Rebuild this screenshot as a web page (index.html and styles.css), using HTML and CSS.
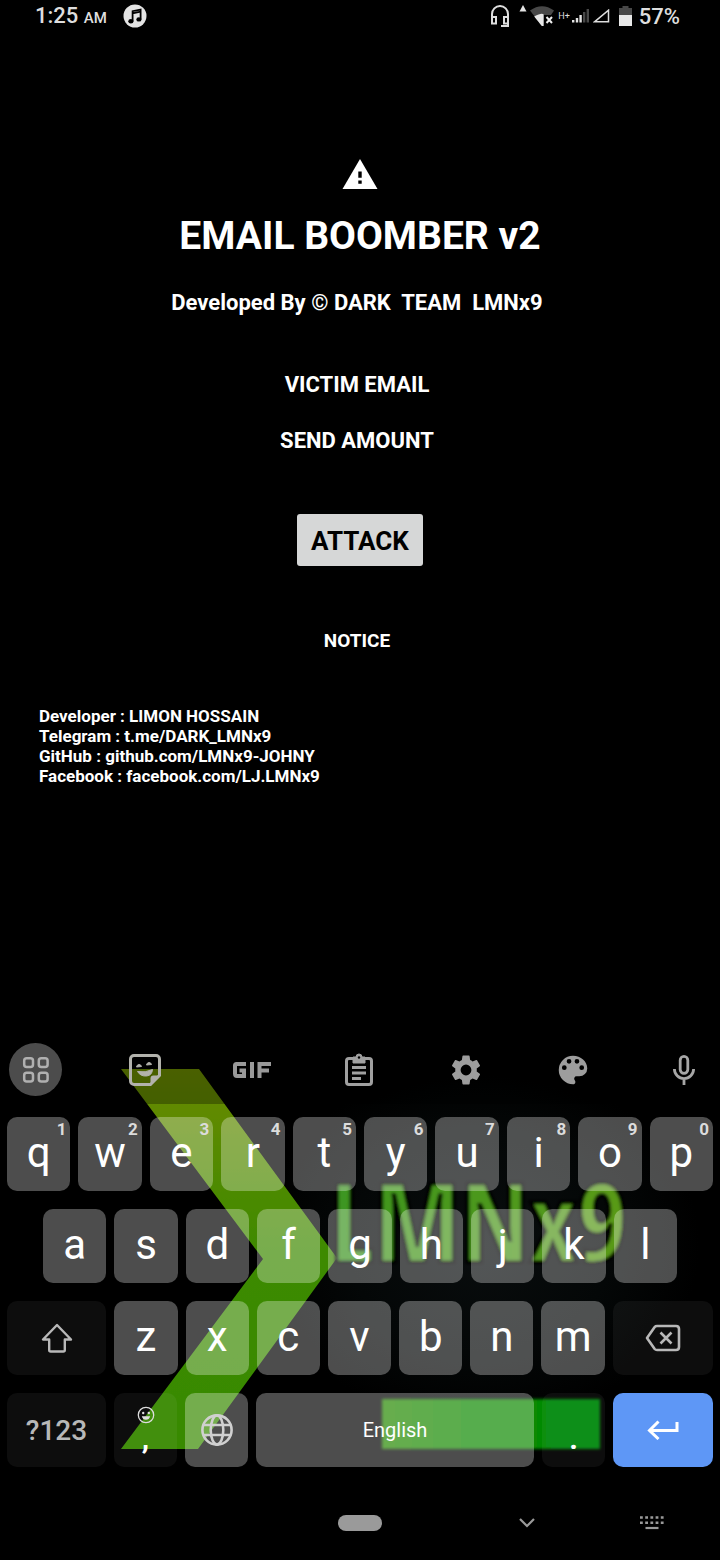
FILE: index.html
```html
<!DOCTYPE html>
<html lang="en">
<head>
<meta charset="utf-8">
<meta name="viewport" content="width=device-width, initial-scale=1">
<title>EMAIL BOOMBER v2</title>
<link rel="stylesheet" href="styles.css">
</head>
<body>
<header class="status">
  <div class="status-left">
    <span class="clock">1:25 <small>AM</small></span>
    <svg class="music" width="24" height="24" viewBox="0 0 24 24"><circle cx="12" cy="12" r="11.5" fill="#e4e4e4"/><path d="M9.600 17V7.200l8-1.700v9.800M9.600 9.400l8-1.700" fill="none" stroke="#000" stroke-width="1.800"/><ellipse cx="7.900" cy="17.200" rx="2.600" ry="2.200"/><ellipse cx="15.900" cy="15.400" rx="2.600" ry="2.200"/></svg>
  </div>
  <div class="status-right">
    <svg class="gap-l" width="20" height="24" viewBox="0 0 20 24" fill="none" stroke="#dedede" stroke-width="2"><path d="M2 19.500V10a8 8 0 0 1 16 0v12H11"/><rect x="2" y="13" width="4" height="6.500"/><rect x="14" y="13" width="4" height="6.500"/></svg>
    <svg class="gap-s" width="36" height="22" viewBox="0 0 36 22"><path d="M4 0l3.500 6.500h-7z" fill="#e4e4e4"/><path d="M11 5.500Q23 -3 35 5.500L31 11.500 23 21z" fill="#484848"/><path d="M15.200 11.500q8-4.500 9.600-1.800V21h-2z" fill="#e8e8e8"/><path d="M24.800 10h10v12h-10z" fill="#000"/><path d="M27.500 12l5.500 6m0-6l-5.500 6" stroke="#eee" stroke-width="2"/></svg>
    <span class="net">H+</span>
    <svg class="gap-s" width="18" height="14" viewBox="0 0 18 14"><path d="M0 11h2.400v2.500H0zM3.800 9h2.400v4.500H3.800zM7.400 6h2.400v7.500H7.400z" fill="#e4e4e4"/><path d="M11 3h2.400v10.500H11zM14.600 0H17v13.500h-2.400z" fill="#484848"/></svg>
    <svg class="gap-l" width="17" height="14" viewBox="0 0 17 14"><path d="M1.500 12.800L15.500 1.200v11.600z" fill="none" stroke="#dedede" stroke-width="1.500"/></svg>
    <svg class="gap-m" width="13" height="20" viewBox="0 0 13 20"><path d="M0 2h3.500V0h6v2H13v8H0z" fill="#484848"/><path d="M0 9h13v11H0z" fill="#e8e8e8"/></svg>
    <span class="battery">57%</span>
  </div>
</header>

<main class="app">
  <svg class="warning" width="36" height="30" viewBox="0 0 36 30"><path d="M18 0l17.500 30H.5z" fill="#fff"/><path d="M16.300 12.500h3.400v6.200h-3.400zM16.300 21.500h3.400v3.300h-3.400z"/></svg>
  <h1 class="title">EMAIL BOOMBER v2</h1>
  <p class="credit">Developed By © DARK&nbsp; TEAM&nbsp; LMNx9</p>
  <div class="fields">
    <input class="field" type="text" aria-label="Victim email" placeholder="VICTIM EMAIL">
    <input class="field" type="text" aria-label="Send amount" placeholder="SEND AMOUNT">
  </div>
  <button class="attack" type="button">ATTACK</button>
  <h2 class="notice">NOTICE</h2>
  <ul class="info">
    <li>Developer : LIMON HOSSAIN</li>
    <li>Telegram : t.me/DARK_LMNx9</li>
    <li>GitHub : github.com/LMNx9-JOHNY</li>
    <li>Facebook : facebook.com/LJ.LMNx9</li>
  </ul>
</main>

<section class="keyboard" aria-label="Keyboard">
  <svg class="wallpaper" viewBox="0 0 720 432" preserveAspectRatio="none" aria-hidden="true">
    <defs>
      <linearGradient id="arrow" x1="0" y1="0" x2="0" y2="1"><stop offset="0" stop-color="#6a8a00"/><stop offset=".5" stop-color="#3c8a00"/><stop offset="1" stop-color="#388a00"/></linearGradient>
      <linearGradient id="bar" x1="0" y1="0" x2="1" y2="0"><stop offset="0" stop-color="#288a00"/><stop offset=".45" stop-color="#0c8a04"/><stop offset="1" stop-color="#008a08"/></linearGradient>
      <linearGradient id="name" x1="0" y1="0" x2="1" y2="0"><stop offset="0" stop-color="#3c9620"/><stop offset="1" stop-color="#5a9a18"/></linearGradient>
      <radialGradient id="glow"><stop offset="0" stop-color="#090d0e"/><stop offset=".6" stop-color="#040707"/><stop offset="1" stop-color="#000"/></radialGradient>
      <filter id="soft"><feGaussianBlur stdDeviation="1.500"/></filter>
      <filter id="edge"><feGaussianBlur stdDeviation=".7"/></filter>
    </defs>
    <ellipse cx="480" cy="210" rx="220" ry="180" fill="url(#glow)"/>
    <path d="M121 34h78l138 189-139 191h-77l142-190z" fill="url(#arrow)" filter="url(#edge)"/>
    <text class="brand" x="330" y="227" fill="url(#name)" filter="url(#soft)">LMNx9</text>
    <path d="M382 364h218v50H382z" fill="url(#bar)" filter="url(#soft)"/>
  </svg>

  <div class="toolbar">
    <button class="tool tool-menu" type="button" aria-label="Menu"><svg width="28" height="28" viewBox="0 0 28 28" fill="none" stroke="#b0b0b0" stroke-width="2.500"><rect x="2.200" y="2.200" width="8.800" height="8.800" rx="2.500"/><rect x="16.800" y="2.200" width="8.800" height="8.800" rx="2.500"/><rect x="2.200" y="16.800" width="8.800" height="8.800" rx="2.500"/><rect x="16.800" y="16.800" width="8.800" height="8.800" rx="2.500"/></svg></button>
    <button class="tool" type="button" aria-label="Stickers"><svg width="32" height="32" viewBox="0 0 32 32"><path d="M5 1.500h22a3.500 3.500 0 0 1 3.500 3.500v16.500l-9 9H5A3.500 3.500 0 0 1 1.500 27V5A3.500 3.500 0 0 1 5 1.500z" fill="none" stroke="#b2b2ac" stroke-width="3"/><path d="M30.500 21.500h-6a3 3 0 0 0-3 3v6z" fill="#b2b2ac"/><path d="M8.500 17.500q8 1.500 15-2-.5 6-6 6.500-6 .5-9-4.500zM7.500 13q.5-2.500 2.500-2.500t2.500 2zM17.500 11q.5-2.500 2.500-2.500t2.500 2z" fill="#b2b2ac" stroke="#b2b2ac"/></svg></button>
    <button class="tool tool-gif" type="button" aria-label="GIF"><svg width="40" height="18" viewBox="0 0 40 18" fill="none" stroke="#999" stroke-width="4"><path d="M14 3H4.500Q3 3 3 4.500v8Q3 15 5 15h7V9.500H7.500M20 1v16M27.500 17V3H39M27.500 9.500H37"/></svg></button>
    <button class="tool" type="button" aria-label="Clipboard"><svg width="30" height="34" viewBox="0 0 30 34" fill="none" stroke="#a0a0a0"><rect x="2.500" y="5.500" width="25" height="26" rx="2.500" stroke-width="3"/><path d="M9 4h3a3 3 0 0 1 6 0h3v6H9z" fill="#a0a0a0"/><circle cx="15" cy="4.500" r="1.200" fill="#000" stroke="none"/><path d="M8 14.500h14M8 20h14M8 25.500h9" stroke-width="2.800"/></svg></button>
    <button class="tool" type="button" aria-label="Settings"><svg width="36" height="36" viewBox="0 0 24 24" fill="#9d9d9d"><path d="M19.140 12.940c.04-.3.06-.61.06-.94s-.02-.64-.07-.94l2.030-1.580a.49.49 0 0 0 .12-.61l-1.920-3.320a.49.49 0 0 0-.59-.22l-2.390.96a7 7 0 0 0-1.620-.94l-.36-2.540A.48.48 0 0 0 13.920 2.400h-3.840a.48.48 0 0 0-.47.41l-.36 2.540c-.59.24-1.130.57-1.620.94l-2.390-.96a.48.48 0 0 0-.59.22L2.740 8.870a.48.48 0 0 0 .12.61l2.030 1.580a7 7 0 0 0 0 1.880l-2.030 1.580a.49.49 0 0 0-.12.61l1.920 3.320c.12.22.37.29.59.22l2.390-.96c.5.380 1.030.7 1.620.94l.36 2.540c.05.24.24.41.48.41h3.840c.24 0 .44-.17.470-.41l.36-2.540c.59-.24 1.130-.56 1.620-.94l2.390.96c.22.080.47 0 .59-.22l1.920-3.320a.48.48 0 0 0-.12-.61zM12 15.600a3.600 3.600 0 1 1 0-7.200 3.600 3.600 0 0 1 0 7.200z"/></svg></button>
    <button class="tool" type="button" aria-label="Theme"><svg width="38" height="38" viewBox="0 0 24 24" fill="#9d9d9d"><path d="M12 3a9 9 0 0 0 0 18c.83 0 1.500-.67 1.500-1.500 0-.39-.15-.74-.39-1.010a1.500 1.500 0 0 1 1.110-2.490H16a5 5 0 0 0 5-5c0-4.420-4.030-8-9-8zm-5.500 9a1.500 1.500 0 1 1 0-3 1.500 1.500 0 0 1 0 3zm3-4a1.500 1.500 0 1 1 0-3 1.500 1.500 0 0 1 0 3zm5 0a1.500 1.500 0 1 1 0-3 1.500 1.500 0 0 1 0 3zm3 4a1.500 1.500 0 1 1 0-3 1.500 1.500 0 0 1 0 3z"/></svg></button>
    <button class="tool tool-mic" type="button" aria-label="Voice input"><svg width="28" height="32" viewBox="0 0 28 32" fill="none" stroke="#a6a6a6" stroke-width="2.800"><rect x="10.200" y="2.400" width="7.600" height="17" rx="3.800"/><path d="M4.400 15a9.600 9.600 0 0 0 19.200 0M14 25v6"/></svg></button>
  </div>

  <div class="keys">
    <div class="row">
      <button class="key" type="button">q<span class="hint">1</span></button>
      <button class="key" type="button">w<span class="hint">2</span></button>
      <button class="key" type="button">e<span class="hint">3</span></button>
      <button class="key" type="button">r<span class="hint">4</span></button>
      <button class="key" type="button">t<span class="hint">5</span></button>
      <button class="key" type="button">y<span class="hint">6</span></button>
      <button class="key" type="button">u<span class="hint">7</span></button>
      <button class="key" type="button">i<span class="hint">8</span></button>
      <button class="key" type="button">o<span class="hint">9</span></button>
      <button class="key" type="button">p<span class="hint">0</span></button>
    </div>
    <div class="row row-inset">
      <button class="key" type="button">a</button>
      <button class="key" type="button">s</button>
      <button class="key" type="button">d</button>
      <button class="key" type="button">f</button>
      <button class="key" type="button">g</button>
      <button class="key" type="button">h</button>
      <button class="key" type="button">j</button>
      <button class="key" type="button">k</button>
      <button class="key" type="button">l</button>
    </div>
    <div class="row row-wide">
      <button class="key dark" type="button" aria-label="Shift"><svg width="32" height="30" viewBox="0 0 32 30" fill="none" stroke="#b8b8b8" stroke-width="2.400" stroke-linejoin="round"><path d="M16 2L2 16.500h6.200V27q0 1.500 1.500 1.500h12.600q1.500 0 1.500-1.500V16.500H30z"/></svg></button>
      <button class="key" type="button">z</button>
      <button class="key" type="button">x</button>
      <button class="key" type="button">c</button>
      <button class="key" type="button">v</button>
      <button class="key" type="button">b</button>
      <button class="key" type="button">n</button>
      <button class="key" type="button">m</button>
      <button class="key dark" type="button" aria-label="Backspace"><svg width="36" height="28" viewBox="0 0 36 28" fill="none" stroke="#b8b8b8" stroke-width="2.600" stroke-linejoin="round"><path d="M12 2h19q3 0 3 3v18q0 3-3 3H12q-1.500 0-2.300-1L2 14 9.700 3Q10.500 2 12 2zM15.500 8.500l11 11m0-11l-11 11"/></svg></button>
    </div>
    <div class="row row-bottom">
      <button class="key dark symbols" type="button">?123</button>
      <button class="key dark punct" type="button" aria-label="Comma"><svg width="18" height="18" viewBox="0 0 18 18"><circle cx="9" cy="9" r="7.700" fill="none" stroke="#ddd" stroke-width="1.300"/><circle cx="6.200" cy="7" r="1.200" fill="#ddd"/><circle cx="11.800" cy="7" r="1.200" fill="#ddd"/><path d="M4.800 10.200h8.400q-1 3.600-4.200 3.600t-4.200-3.600z" fill="#ddd"/></svg><span>,</span></button>
      <button class="key" type="button" aria-label="Change language"><svg width="34" height="34" viewBox="0 0 34 34" fill="none" stroke="#d0d0d0" stroke-width="2.600"><circle cx="17" cy="17" r="14.600"/><ellipse cx="17" cy="17" rx="6.300" ry="14.600"/><path d="M3.500 12h27M3.500 22h27"/></svg></button>
      <button class="key space" type="button">English</button>
      <button class="key dark punct" type="button"><span>.</span></button>
      <button class="key enter" type="button" aria-label="Enter"><svg width="32" height="20" viewBox="0 0 32 20" fill="none" stroke="#fff" stroke-width="3"><path d="M30 2v8.500H3M11.500 1.500l-9 9 9 8.500"/></svg></button>
    </div>
  </div>
</section>

<nav class="nav" aria-label="System">
  <button class="nav-btn home" type="button" aria-label="Home"><span class="pill"></span></button>
  <button class="nav-btn" type="button" aria-label="Hide keyboard"><svg width="18" height="10" viewBox="0 0 18 10" fill="none" stroke="#9a9a9a" stroke-width="2.200"><path d="M2 1l7 7 7-7"/></svg></button>
  <button class="nav-btn" type="button" aria-label="Switch keyboard"><svg width="24" height="14" viewBox="0 0 24 14" fill="none" stroke="#9a9a9a" stroke-width="2.600"><path d="M0 1.500h24M0 6.700h24" stroke-dasharray="2.800 2.400"/><path d="M5.500 12h13" stroke-width="2.200"/></svg></button>
</nav>
</body>
</html>
```
FILE: styles.css
```css
* {
  box-sizing: border-box;
}

body {
  margin: 0;
  min-height: 100vh;
  display: flex;
  flex-direction: column;
  background: #000;
  color: #fff;
  font-family: Roboto, "Liberation Sans", sans-serif;
}

button,
input {
  margin: 0;
  padding: 0;
  border: 0;
  background: none;
  color: inherit;
  font: inherit;
}

svg {
  display: block;
  flex: none;
}

/* Status bar */
.status {
  display: flex;
  justify-content: space-between;
  height: 32px;
  padding: 0 40px 0 35px;
  color: #dedede;
}

.status-left,
.status-right {
  display: flex;
  align-items: center;
}

.status-left {
  gap: 16px;
}

.clock,
.battery {
  padding-top: 2px;
  font-size: 22px;
  font-weight: 500;
  line-height: 30px;
}

.clock small {
  font-size: 15px;
}

.net {
  margin-right: 2px;
  font-size: 9px;
  line-height: 12px;
}

.gap-l {
  margin-right: 9px;
}

.gap-m {
  margin-right: 7px;
}

.gap-s {
  margin-right: 3px;
}

/* App screen */
.app {
  flex: 1;
  display: flex;
  flex-direction: column;
  align-items: center;
  padding-top: 127px;
  font-weight: 700;
}

.title {
  margin: 23px 0 0;
  font-size: 39px;
  line-height: 48px;
}

.credit {
  align-self: stretch;
  margin: 29px 0 0;
  padding-right: 6px;
  font-size: 22px;
  line-height: 28px;
  text-align: center;
}

.fields {
  display: flex;
  flex-direction: column;
  gap: 24px;
  width: 100%;
  margin-top: 51px;
  padding-right: 6px;
}

.field {
  width: 100%;
  height: 32px;
  font-size: 22px;
  text-align: center;
}

.field::placeholder {
  color: #fff;
  opacity: 1;
}

.attack {
  height: 52px;
  margin-top: 58px;
  padding: 2px 14px 0;
  border-radius: 3px;
  background: #d6d7d7;
  color: #000;
  font-size: 26px;
}

.notice {
  align-self: stretch;
  margin: 63px 0 0;
  padding-right: 6px;
  font-size: 19px;
  line-height: 24px;
  text-align: center;
}

.info {
  align-self: stretch;
  margin: 53px 0 0;
  padding: 0 39px;
  list-style: none;
  font-size: 17px;
  line-height: 20px;
}

/* Keyboard */
.keyboard {
  position: relative;
}

.wallpaper {
  position: absolute;
  inset: 0;
  width: 100%;
  height: 100%;
}

.brand {
  font-family: "Open Sans Condensed", "Roboto Condensed", Roboto, sans-serif;
  font-size: 110px;
  stroke: #030505;
  stroke-width: 4px;
}

.toolbar {
  position: relative;
  display: grid;
  grid-template-columns: 91fr repeat(5, 107fr) 94fr;
  align-items: center;
  justify-items: center;
  height: 69px;
  background: rgba(0, 0, 0, 0.3);
}

.tool {
  display: flex;
  align-items: center;
  justify-content: center;
}

.tool-menu {
  justify-self: start;
  width: 53px;
  height: 53px;
  margin-left: 9px;
  border-radius: 50%;
  background: #4c4c4c;
}

.tool-mic {
  justify-self: end;
  margin-right: 22px;
}

.keys {
  position: relative;
  display: grid;
  gap: 18px;
  padding: 13px 7px 0;
}

.row {
  display: grid;
  grid-template-columns: repeat(10, 1fr);
  gap: 8px;
}

.row-inset {
  grid-template-columns: repeat(9, 1fr);
  padding: 0 36px;
}

.row-wide {
  grid-template-columns: 99fr repeat(7, 63fr) 100fr;
}

.row-bottom {
  grid-template-columns: 99fr 63fr 63fr 278fr 63fr 100fr;
}

.key {
  position: relative;
  display: flex;
  align-items: center;
  justify-content: center;
  min-width: 0;
  height: 74px;
  padding-bottom: 4px;
  border-radius: 10px;
  background: rgba(255, 255, 255, 0.3);
  font-size: 42px;
}

.key > svg {
  margin-top: 3px;
}

.hint {
  position: absolute;
  top: 2px;
  right: 4px;
  color: #dcdcdc;
  font-size: 17px;
  font-weight: 700;
  line-height: 20px;
}

.dark {
  background: rgba(255, 255, 255, 0.05);
}

.symbols {
  padding: 0;
  color: #b8b8b8;
  font-size: 28px;
  font-weight: 500;
}

.punct {
  flex-direction: column;
  justify-content: flex-end;
  padding-bottom: 13px;
  font-size: 30px;
  font-weight: 700;
  line-height: 30px;
}

.space {
  padding: 0;
  font-size: 20px;
}

.enter {
  background: #5e97f6;
}

/* System navigation */
.nav {
  display: grid;
  grid-template-columns: 276fr 168fr 166fr 84fr 26fr;
  align-items: center;
  height: 93px;
}

.nav-btn {
  display: flex;
  align-items: center;
  justify-content: center;
  height: 48px;
  margin-top: 18px;
}

.home {
  grid-column: 2;
}

.pill {
  width: 44px;
  height: 16px;
  border-radius: 8px;
  background: #9a9a9a;
}
```
